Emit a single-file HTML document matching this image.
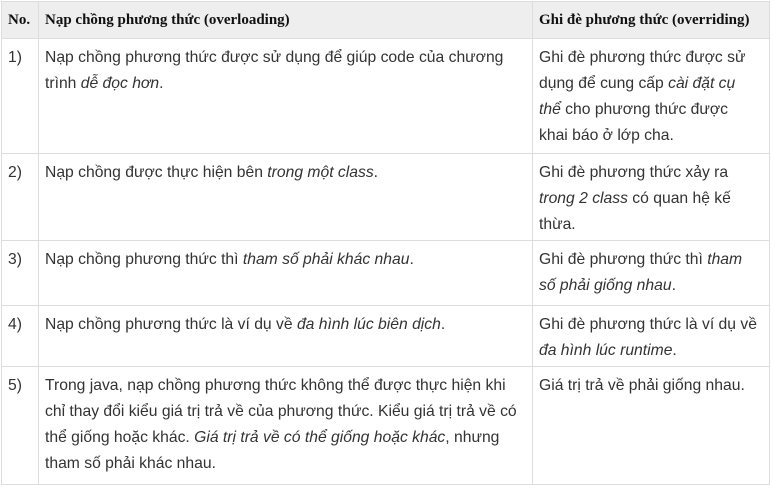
<!DOCTYPE html>
<html><head><meta charset="utf-8"><style>
html,body{margin:0;padding:0;background:#fff;}
table{position:absolute;left:1px;top:1px;border-collapse:collapse;table-layout:fixed;width:768px;font-family:"Liberation Sans",Arial,sans-serif;font-size:15.7px;color:#333;}
td,th{border:1px solid #ddd;vertical-align:top;padding:6px 6px 0 6px;line-height:26px;text-align:left;}
td.c3{padding-right:12px;}
th{background:#eee;font-family:"Liberation Serif",serif;font-weight:bold;font-size:15px;color:#111;padding:5px 6px 0 6px;height:31px;}
i{font-style:italic;}
</style></head><body>
<table>
<colgroup><col style="width:37px"><col style="width:494px"><col style="width:237px"></colgroup>
<tr><th>No.</th><th>Nạp chồng phương thức (overloading)</th><th>Ghi đè phương thức (overriding)</th></tr>
<tr style="height:115px"><td>1)</td><td>Nạp chồng phương thức được sử dụng để giúp code của chương trình <i>dễ đọc hơn</i>.</td><td class="c3">Ghi đè phương thức được sử dụng để cung cấp <i>cài đặt cụ thể</i> cho phương thức được khai báo ở lớp cha.</td></tr>
<tr style="height:87px"><td>2)</td><td>Nạp chồng được thực hiện bên <i>trong một class</i>.</td><td class="c3">Ghi đè phương thức xảy ra <i>trong 2 class</i> có quan hệ kế thừa.</td></tr>
<tr style="height:65px"><td>3)</td><td>Nạp chồng phương thức thì <i>tham số phải khác nhau</i>.</td><td class="c3">Ghi đè phương thức thì <i>tham số phải giống nhau</i>.</td></tr>
<tr style="height:61px"><td>4)</td><td>Nạp chồng phương thức là ví dụ về <i>đa hình lúc biên dịch</i>.</td><td class="c3">Ghi đè phương thức là ví dụ về <i>đa hình lúc runtime</i>.</td></tr>
<tr style="height:118px"><td>5)</td><td>Trong java, nạp chồng phương thức không thể được thực hiện khi chỉ thay đổi kiểu giá trị trả về của phương thức. Kiểu giá trị trả về có thể giống hoặc khác. <i>Giá trị trả về có thể giống hoặc khác</i>, nhưng tham số phải khác nhau.</td><td class="c3">Giá trị trả về phải giống nhau.</td></tr>
</table>
</body></html>
